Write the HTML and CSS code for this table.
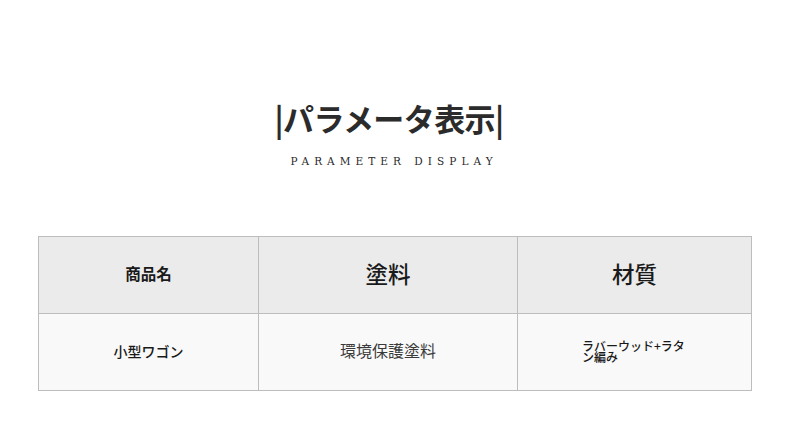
FILE: index.html
```html
<!DOCTYPE html>
<html lang="ja">
<head>
<meta charset="utf-8">
<link rel="stylesheet" href="styles.css">
</head>
<body>
<div class="page">
  <div class="heading">
    <h1 class="title">|パラメータ表示|</h1>
    <div class="subtitle">PARAMETER DISPLAY</div>
  </div>
  <table class="spec">
    <tr class="head">
      <td class="c1"><span class="t-name">商品名</span></td>
      <td class="c2"><span class="t-big">塗料</span></td>
      <td class="c3"><span class="t-big">材質</span></td>
    </tr>
    <tr class="body">
      <td class="c1"><span class="t-val">小型ワゴン</span></td>
      <td class="c2"><span class="t-val2">環境保護塗料</span></td>
      <td class="c3"><span class="t-small">ラバーウッド+ラタン編み</span></td>
    </tr>
  </table>
</div>
</body>
</html>
```
FILE: styles.css
```css
html, body {
  margin: 0;
  padding: 0;
  background: #ffffff;
}
body {
  font-family: "Noto Sans CJK JP", "Noto Sans", sans-serif;
  color: #222;
}
.page {
  width: 790px;
  height: 437px;
  padding-top: 93px;
  box-sizing: border-box;
}
.heading {
  text-align: center;
  padding-right: 12px;
}
.title {
  margin: 0;
  font-size: 31px;
  font-weight: 700;
  line-height: 50px;
  color: #2b2b2b;
  letter-spacing: -0.6px;
}
.subtitle {
  margin-top: 11px;
  font-family: "DejaVu Serif", "Liberation Serif", serif;
  font-size: 10.5px;
  letter-spacing: 5.05px;
  color: #2a2a2a;
  line-height: 14px;
  padding-left: 10px;
}
.spec {
  margin: 68px 0 0 38px;
  border-collapse: collapse;
  width: 714px;
  table-layout: fixed;
}
.spec td {
  border: 1px solid #bdbdbd;
  text-align: center;
  vertical-align: middle;
  padding: 0 0 5px 0;
}
.head td {
  background: #ebebeb;
  height: 71px;
}
.body td {
  background: #f9f9f9;
  height: 71px;
}
.c1 { width: 219px; }
.c2 { width: 258px; }
.t-name {
  font-size: 15.5px;
  font-weight: 700;
  color: #1a1a1a;
}
.t-big {
  font-size: 22.5px;
  font-weight: 500;
  color: #1a1a1a;
}
.t-val {
  font-size: 14px;
  font-weight: 500;
  color: #1a1a1a;
}
.t-val2 {
  font-size: 16px;
  color: #3a3a3a;
}
.t-small {
  display: block;
  width: 108px;
  margin-left: 64px;
  margin-top: 3px;
  text-align: left;
  font-size: 12px;
  font-weight: 500;
  line-height: 11px;
  color: #1a1a1a;
}
```
